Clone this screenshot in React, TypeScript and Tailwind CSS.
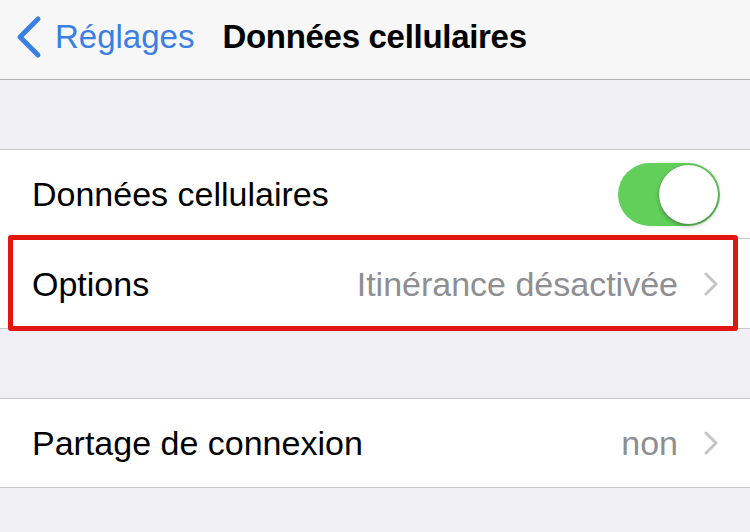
import React from "react";

function Chevron() {
  return (
    <svg width="16" height="24" viewBox="0 0 16 24" className="shrink-0">
      <path d="M3 2 L13 12 L3 22" fill="none" stroke="#c4c4c9" strokeWidth="3" strokeLinecap="round" strokeLinejoin="round" />
    </svg>
  );
}

function Toggle() {
  return (
    <div className="relative w-[102px] h-[63px] rounded-full bg-[#62cf5b] shrink-0">
      <div className="absolute right-[2px] top-[2px] w-[59px] h-[59px] rounded-full bg-white shadow-[0_2px_4px_rgba(0,0,0,0.3),0_0_1px_rgba(0,0,0,0.3)]" />
    </div>
  );
}

export default function App() {
  return (
    <div
      className="w-[750px] h-[532px] bg-[#efeff4] overflow-hidden text-black"
      style={{ fontFamily: '"Liberation Sans", Arial, sans-serif' }}
    >
      {/* Nav bar */}
      <div className="h-[80px] bg-[#f7f7f8] border-b border-[#b2b2b2] flex items-center pb-[6px]">
        <svg width="30" height="44" viewBox="0 0 30 44" className="ml-[14px] shrink-0">
          <path d="M24 4 L6 22 L24 40" fill="none" stroke="#3a7fe4" strokeWidth="5" strokeLinecap="round" strokeLinejoin="round" />
        </svg>
        <span className="ml-[11px] text-[33px] text-[#3a7fe4] leading-none">Réglages</span>
        <span className="ml-[28px] text-[33px] font-bold leading-none tracking-[-0.3px]">Données cellulaires</span>
      </div>

      <div className="h-[69px]" />

      {/* Section 1 */}
      <div className="bg-white border-y border-[#c8c7cc]">
        <div className="h-[88px] flex items-center justify-between pl-[32px] pr-[30px]">
          <span className="text-[34px] leading-none">Données cellulaires</span>
          <Toggle />
        </div>
        <div className="ml-[32px] h-px bg-[#c8c7cc]" />
        <div className="relative h-[89px] flex items-center justify-between pl-[32px] pr-[31px]">
          <span className="text-[34px] leading-none">Options</span>
          <div className="flex items-center gap-[25px]">
            <span className="text-[34px] leading-none text-[#8e8e93]">Itinérance désactivée</span>
            <Chevron />
          </div>
          <div className="absolute left-[8px] top-[-4px] w-[730px] h-[96px] border-[5px] border-[#e3150f] rounded-[3px]" />
        </div>
      </div>

      <div className="h-[69px]" />

      {/* Section 2 */}
      <div className="bg-white border-y border-[#c8c7cc]">
        <div className="h-[88px] flex items-center justify-between pl-[32px] pr-[31px]">
          <span className="text-[34px] leading-none">Partage de connexion</span>
          <div className="flex items-center gap-[25px]">
            <span className="text-[34px] leading-none text-[#8e8e93]">non</span>
            <Chevron />
          </div>
        </div>
      </div>
    </div>
  );
}
